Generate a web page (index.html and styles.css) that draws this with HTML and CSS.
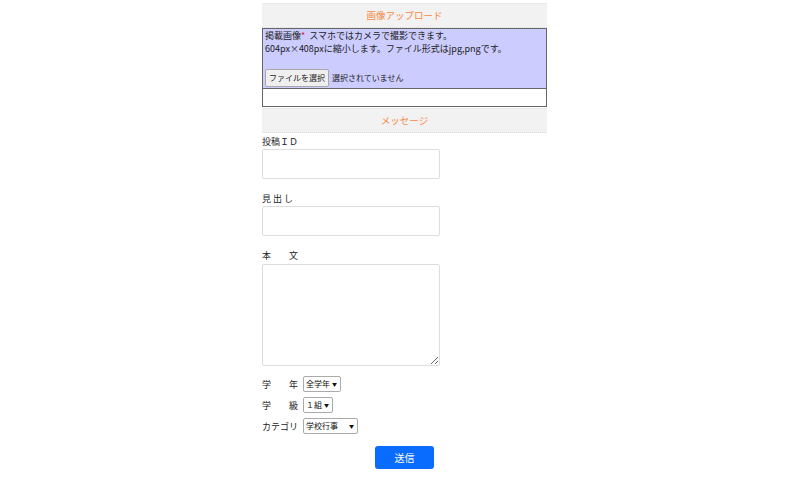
FILE: index.html
```html
<!DOCTYPE html>
<html lang="ja">
<head>
<meta charset="utf-8">
<title>投稿フォーム</title>
<link rel="stylesheet" href="styles.css">
</head>
<body>
<form class="form">
  <div class="sec-head">画像アップロード</div>
  <div class="upload">
    <div class="upload-main">
      <p class="line">掲載画像<span class="req">*</span>&nbsp; スマホではカメラで撮影できます。</p>
      <p class="line">604px×408pxに縮小します。ファイル形式はjpg,pngです。</p>
      <p class="line">&nbsp;</p>
      <div class="file-row"><span class="file-btn">ファイルを選択</span><span class="file-none">選択されていません</span></div>
    </div>
    <div class="upload-foot"></div>
  </div>
  <div class="sec-head">メッセージ</div>

  <label class="lbl first">投稿ＩＤ</label>
  <input class="txt" type="text">

  <label class="lbl">見 出 し</label>
  <input class="txt" type="text">

  <label class="lbl">本　　文</label>
  <textarea class="area"></textarea>

  <div class="sel-rows">
    <div class="sel-row"><span class="sel-lbl">学　　年</span><span class="sel w-grade">全学年</span></div>
    <div class="sel-row"><span class="sel-lbl">学　　級</span><span class="sel w-class">１組</span></div>
    <div class="sel-row"><span class="sel-lbl">カテゴリ</span><span class="sel w-cat">学校行事</span></div>
  </div>

  <div class="actions"><button class="submit" type="button">送信</button></div>
</form>
</body>
</html>
```

FILE: styles.css
```css
html, body {
  margin: 0;
  padding: 0;
  background: #ffffff;
}
body {
  padding-left: 9px;
  font-family: "Noto Sans CJK JP", "Noto Sans", sans-serif;
  font-size: 9px;
  color: #333333;
}
.form {
  width: 285px;
  margin: 0 auto;
  padding-top: 3px;
}
.sec-head {
  height: 23px;
  line-height: 23px;
  background: #f2f2f2;
  border-top: 1px dotted #e2e2e2;
  border-bottom: 1px dotted #dcdcdc;
  color: #f7883f;
  text-align: center;
  font-size: 9.5px;
}
.upload {
  border: 1px solid #666666;
  margin-bottom: 1px;
}
.upload-main {
  background: #ccccff;
  border-bottom: 1px solid #666666;
  padding: 0 2px 1px 2px;
  color: #222;
}
.line {
  margin: 0;
  height: 13px;
  line-height: 13px;
  white-space: nowrap;
}
.req { color: #e8202a; }
.file-row {
  display: flex;
  align-items: center;
  gap: 3px;
  height: 19px;
  font-size: 8px;
}
.file-btn {
  display: inline-block;
  height: 16px;
  line-height: 16px;
  padding: 0 3px;
  background: #efefef;
  border: 1px solid #a8a8a8;
  border-radius: 2px;
  color: #222;
}
.file-none { color: #222; }
.upload-foot {
  height: 17px;
  background: #ffffff;
}
.lbl {
  display: block;
  height: 15px;
  line-height: 15px;
  color: #222;
}
.lbl.first { margin-top: 1px; }
.txt {
  display: block;
  box-sizing: border-box;
  width: 178px;
  height: 30px;
  margin: 0 0 12px 0;
  border: 1px solid #dddddd;
  border-radius: 2px;
  background: #fff;
  padding: 0 4px;
}
.area {
  display: block;
  box-sizing: border-box;
  width: 178px;
  height: 102px;
  margin: 1px 0 10px 0;
  border: 1px solid #dddddd;
  border-radius: 2px;
  background: #fff;
  resize: vertical;
}
.sel-rows {
  display: flex;
  flex-direction: column;
  gap: 5px;
}
.sel-row {
  display: flex;
  align-items: center;
  gap: 2px;
  height: 16px;
  color: #222;
}
.sel-lbl {
  width: 39px;
  white-space: nowrap;
}
.sel {
  position: relative;
  box-sizing: border-box;
  height: 16px;
  line-height: 14px;
  border: 1px solid #aaaaaa;
  border-radius: 2px;
  padding-left: 2px;
  font-size: 8px;
  color: #111;
  background: #fff;
}
.sel::after {
  content: "▼";
  position: absolute;
  right: 3px;
  top: 0;
  font-size: 5px;
  line-height: 14px;
}
.w-grade { width: 38px; }
.w-class { width: 30px; }
.w-cat { width: 55px; }
.actions {
  display: flex;
  justify-content: center;
  margin-top: 12px;
}
.submit {
  width: 59px;
  height: 23px;
  border: 0;
  border-radius: 3px;
  background: #0a6cff;
  color: #fff;
  font-family: inherit;
  font-size: 10px;
  padding: 0;
}
```
